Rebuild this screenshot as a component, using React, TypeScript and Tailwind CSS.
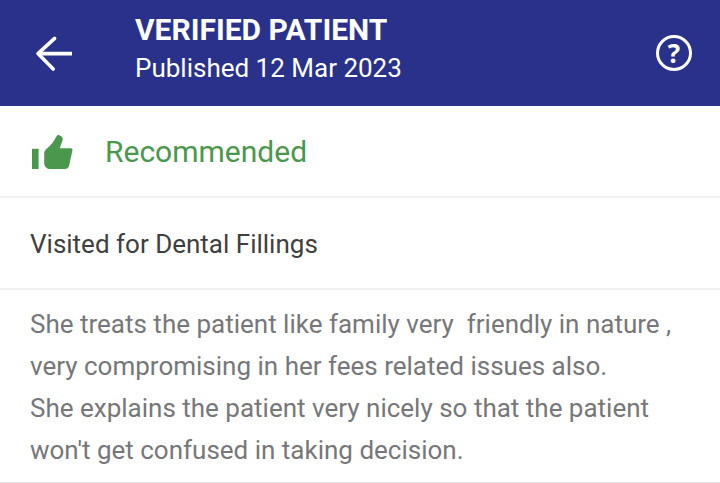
import type { ReactNode } from "react";

const reviewLines = [
  "She treats the patient like family very  friendly in nature ,",
  "very compromising in her fees related issues also.",
  "She explains the patient very nicely so that the patient",
  "won't get confused in taking decision.",
];

function BackIcon() {
  return (
    <svg
      className="w-10 h-10"
      viewBox="0 0 40 40"
      fill="none"
      stroke="currentColor"
      strokeWidth="3.6"
      strokeLinecap="round"
      strokeLinejoin="round"
      aria-hidden="true"
    >
      <path d="M20.6 5.4 4 20.6l15.2 15.4" />
      <path d="M5 20.6h33" strokeLinecap="butt" />
    </svg>
  );
}

function ThumbIcon() {
  return (
    <svg
      className="w-11 h-9 text-[#4a984c]"
      viewBox="0 0 44 36"
      fill="currentColor"
      aria-hidden="true"
    >
      <path d="M2 14.8h6.6V35H2z" />
      <path d="M14.2 19.5c0-2 .7-3.2 2.2-4.4C20.8 11.5 24 7.5 26.4 2.600c.7-1.500 2-2 3.300-1.200l1.400.8c1.500.9 2 2.300 1.500 3.900L29.800 14.200H40.600c1.600 0 2.200.8 1.800 2.400l-3.200 14.600C38.600 33.800 37.300 35 34.800 35H20.800c-4.300 0-6.600-2.500-6.600-6.600z" />
    </svg>
  );
}

function Row({ children }: { children: ReactNode }) {
  return (
    <div className="flex items-center px-[30px] pt-[25px] pb-[23px] border-b-2 border-[#f0f0f0]">
      {children}
    </div>
  );
}

export default function App() {
  return (
    <div className="bg-white font-['Roboto',sans-serif]">
      {/* Header */}
      <header className="flex items-center bg-[#29318b] text-white pl-[34px] pr-7 py-[11px]">
        <button type="button" aria-label="Back" className="mr-[61px]">
          <BackIcon />
        </button>
        <div className="flex-1 pb-2">
          <h1 className="text-[30px] leading-[38px] font-bold">
            VERIFIED PATIENT
          </h1>
          <p className="text-[26px] leading-[38px]">Published 12 Mar 2023</p>
        </div>
        <button
          type="button"
          aria-label="Help"
          className="flex items-center justify-center w-9 h-9 rounded-full border-3 border-white font-['Open_Sans',sans-serif] text-[26px] leading-[26px] font-bold"
        >
          ?
        </button>
      </header>

      <main>
        <Row>
          <ThumbIcon />
          <span className="ml-[31px] text-[30px] leading-[42px] text-[#4a984c]">
            Recommended
          </span>
        </Row>
        <Row>
          <h2 className="text-[26px] leading-[42px] text-[#3f3f40]">
            Visited for Dental Fillings
          </h2>
        </Row>

        {/* Review text */}
        <div className="px-[30px] pt-[13px] pb-[11px] border-b-2 border-[#dddddd] text-[26px] leading-[42px] text-[#77777a]">
          {reviewLines.map((line) => (
            <p key={line} className="whitespace-pre-wrap">
              {line}
            </p>
          ))}
        </div>
      </main>
    </div>
  );
}
